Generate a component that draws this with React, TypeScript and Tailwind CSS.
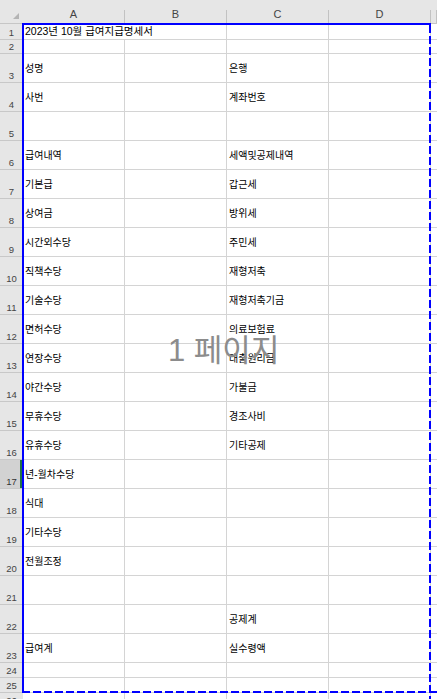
const font = "font-['Liberation_Sans','Noto_Sans_CJK_KR',sans-serif]";

type Row = { h: string; a?: string; c?: string; span?: boolean };

const rows: Row[] = [
  { h: "h-[16px]", a: "2023년 10월 급여지급명세서", span: true },
  { h: "h-[14px]" },
  { h: "h-[29px]", a: "성명", c: "은행" },
  { h: "h-[29px]", a: "사번", c: "계좌번호" },
  { h: "h-[29px]" },
  { h: "h-[29px]", a: "급여내역", c: "세액및공제내역" },
  { h: "h-[29px]", a: "기본급", c: "갑근세" },
  { h: "h-[29px]", a: "상여금", c: "방위세" },
  { h: "h-[29px]", a: "시간외수당", c: "주민세" },
  { h: "h-[29px]", a: "직책수당", c: "재형저축" },
  { h: "h-[29px]", a: "기술수당", c: "재형저축기금" },
  { h: "h-[29px]", a: "면허수당", c: "의료보험료" },
  { h: "h-[29px]", a: "연장수당", c: "대출원리금" },
  { h: "h-[29px]", a: "야간수당", c: "가불금" },
  { h: "h-[29px]", a: "무휴수당", c: "경조사비" },
  { h: "h-[29px]", a: "유휴수당", c: "기타공제" },
  { h: "h-[29px]", a: "년-월차수당" },
  { h: "h-[29px]", a: "식대" },
  { h: "h-[29px]", a: "기타수당" },
  { h: "h-[29px]", a: "전월조정" },
  { h: "h-[29px]" },
  { h: "h-[29px]", c: "공제계" },
  { h: "h-[29px]", a: "급여계", c: "실수령액" },
  { h: "h-[15px]" },
  { h: "h-[15px]" },
  { h: "h-[15px]" },
];

const cell = "shrink-0 w-[102px] h-full border-r border-b border-[#d4d4d4] flex items-center pl-[2px]";
const colHead =
  "shrink-0 h-full flex items-center justify-center pt-[6px] border-r [border-image:linear-gradient(to_bottom,transparent_10px,#c2c2c2_10px)_1]";

export default function App() {
  return (
    <div className={`relative w-[437px] h-[699px] overflow-hidden bg-white ${font}`}>
      {/* column headers */}
      <div className="flex h-[24px] bg-[#e6e6e6] border-b border-[#c6c6c6] text-[11px] text-[#444]">
        <div className="shrink-0 w-[23px] h-full relative">
          <svg className="absolute inset-0" width="23" height="24" viewBox="0 0 23 24">
            <polygon points="19,13 19,19 13,19" fill="#b4b4b4" />
          </svg>
        </div>
        {["A", "B", "C", "D"].map((l) => (
          <div key={l} className={`${colHead} w-[102px]`}>
            {l}
          </div>
        ))}
        <div className={`${colHead} flex-1`} />
      </div>

      {rows.map((r, i) => {
        const n = i + 1;
        const selected = n === 17;
        return (
          <div key={n} className={`flex ${r.h} text-[10px] text-black`}>
            <div
              className={`shrink-0 w-[23px] h-full border-b border-[#c8c8c8] flex items-end justify-center pb-[2px] text-[9.5px] leading-none ${
                selected
                  ? "bg-[#d2d2d2] text-[#333] shadow-[inset_-3px_0_0_#217346]"
                  : "bg-[#e6e6e6] text-[#444]"
              }`}
            >
              {n}
            </div>
            <div
              className={`${cell} ${
                r.span ? "border-r-0 whitespace-nowrap overflow-visible text-[10.5px]" : ""
              }`}
            >
              {r.a}
            </div>
            <div className={cell} />
            <div className={cell}>{r.c}</div>
            <div className={cell} />
            <div className="flex-1 h-full border-b border-[#d4d4d4]" />
          </div>
        );
      })}

      {/* page break preview lines */}
      <div className="absolute left-[22px] top-[23px] w-[409px] h-[2px] bg-[#0000ff]" />
      <div className="absolute left-[22px] top-[23px] w-[2px] h-[670px] bg-[#0000ff]" />
      <div className="absolute left-[429px] top-[25px] w-[2px] h-[674px] bg-[repeating-linear-gradient(to_bottom,#0000ff_0_8px,transparent_8px_11px)]" />
      <div className="absolute left-[22px] top-[691px] w-[415px] h-[2px] bg-[repeating-linear-gradient(to_right,#0000ff_0_8px,transparent_8px_11px)]" />

      {/* page label */}
      <div className="absolute left-[168px] top-[335px] text-[31px] leading-none text-[#8c8c8c] whitespace-nowrap pointer-events-none">
        1 페이지
      </div>
    </div>
  );
}
